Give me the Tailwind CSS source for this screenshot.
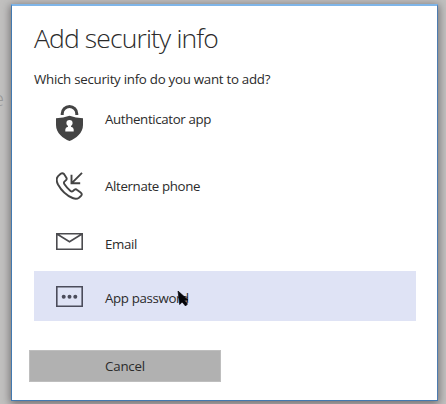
<!DOCTYPE html>
<html lang="en">
<head>
<meta charset="utf-8">
<title>Add security info</title>
<script src="https://cdn.jsdelivr.net/npm/@tailwindcss/browser@4"></script>
</head>
<body class="relative h-[404px] w-[446px] overflow-hidden bg-[#c1c0bf] pt-1 pl-[11px] font-['Open_Sans','Noto_Sans',sans-serif] text-[13.3px] text-[#2b2b2b]">
<span class="absolute -left-[7px] top-[86px] text-[20px] font-light leading-[26px] text-[#999]">e</span>
<main class="relative flex h-[397px] w-[427px] flex-col border border-t-2 border-[#4279b0] border-t-[#7fb5e8] border-r-[#4d7bb0] bg-white shadow-[0_2px_8px_1px_rgba(60,55,60,0.6)]">
  <h1 class="mt-[14px] ml-[22px] h-9 whitespace-nowrap text-[26.5px] font-light leading-9 tracking-[-0.87px]">Add security info</h1>
  <p class="mt-[13px] ml-[22px] h-5 whitespace-nowrap leading-5 tracking-[-0.27px]">Which security info do you want to add?</p>
  <ul class="ml-[22px] flex w-[382px] flex-col tracking-[-0.36px]">
    <li class="flex h-[68px] items-center pl-[22px]">
      <svg class="w-[27px] shrink-0" height="36" viewBox="0 0 27 36" fill="none"><path d="M6.2 10V8.8a7.3 7.3 0 0 1 14.6 0V10" stroke="#444" stroke-width="3"/><path d="M0 13.2Q7.5 12.8 13.5 10.7Q19.5 12.8 27 13.2V20C27 28 20 33.5 13.5 36C7 33.5 0 28 0 20Z" fill="#444"/><circle cx="13.5" cy="18" r="3.1" fill="#fff"/><path d="M12 20H15V21.8Q17.7 22.2 17.7 24.5V26.5H9.3V24.5Q9.3 22.2 12 21.8Z" fill="#fff"/></svg>
      <span class="ml-[22px] -mt-[7px]">Authenticator app</span>
    </li>
    <li class="flex h-[59px] items-center pl-[22px]">
      <svg class="-mt-[2px] w-[27px] shrink-0" height="28" viewBox="0 0 27 28" fill="none" stroke="#444" stroke-width="1.9" stroke-linejoin="round"><path d="M4.7 1.8Q6.4.4 8 2L10.4 5.7Q11.2 7.2 9.8 8.4L8.4 9.6Q7.5 10.7 8.3 12.1Q11 16.2 14.5 19Q15.8 20 17 19L18.4 17.8Q19.8 16.8 21.2 17.9L24.6 20.4Q26.8 22.2 24.9 24L23 25.7Q20.4 27.6 16.6 26Q7.4 22.2 2 12.5Q-.7 7.2 2.1 4.1Z"/><path d="M26 .8L15.5 11.3M15.5 2.7V11.3H24.2" stroke-linejoin="miter"/></svg>
      <span class="ml-[22px]">Alternate phone</span>
    </li>
    <li class="flex h-[53px] items-center pl-[22px]">
      <svg class="-mt-[3px] w-[27px] shrink-0" height="17" viewBox="0 0 27 17" fill="none" stroke="#4b4b4f" stroke-width="1.6"><path d="M.8.8H26.2V16.2H.8ZM1 1L13.5 8.7L26 1"/></svg>
      <span class="mt-[5px] ml-[22px]">Email</span>
    </li>
    <li class="relative mt-[2px] flex h-[50px] items-center bg-[#dfe3f5] pl-[22px]">
      <svg class="w-[27px] shrink-0" height="21" viewBox="0 0 27 21"><path d="M.8.8H26.2V20.2H.8Z" fill="none" stroke="#4b4c5b" stroke-width="1.6"/><g fill="#4b4c5b"><circle cx="7.7" cy="10.7" r="2"/><circle cx="13.5" cy="10.7" r="2"/><circle cx="19.3" cy="10.7" r="2"/></g></svg>
      <span class="mt-[6px] ml-[22px]">App password</span>
      <svg class="absolute top-[20px] left-[143px]" width="12" height="16" viewBox="0 0 12 16"><path d="M1 0L11 9L7.5 9.6L10.5 13L8.5 15L5.2 11L2.7 13.5Z" fill="#050508" stroke="#050508" stroke-width=".7"/></svg>
    </li>
  </ul>
  <button class="mt-[29px] ml-[17px] h-8 w-[192px] border border-[#bebebe] bg-[#b1b1b1] pt-[2px] tracking-[-0.2px]">Cancel</button>
</main>
</body>
</html>
